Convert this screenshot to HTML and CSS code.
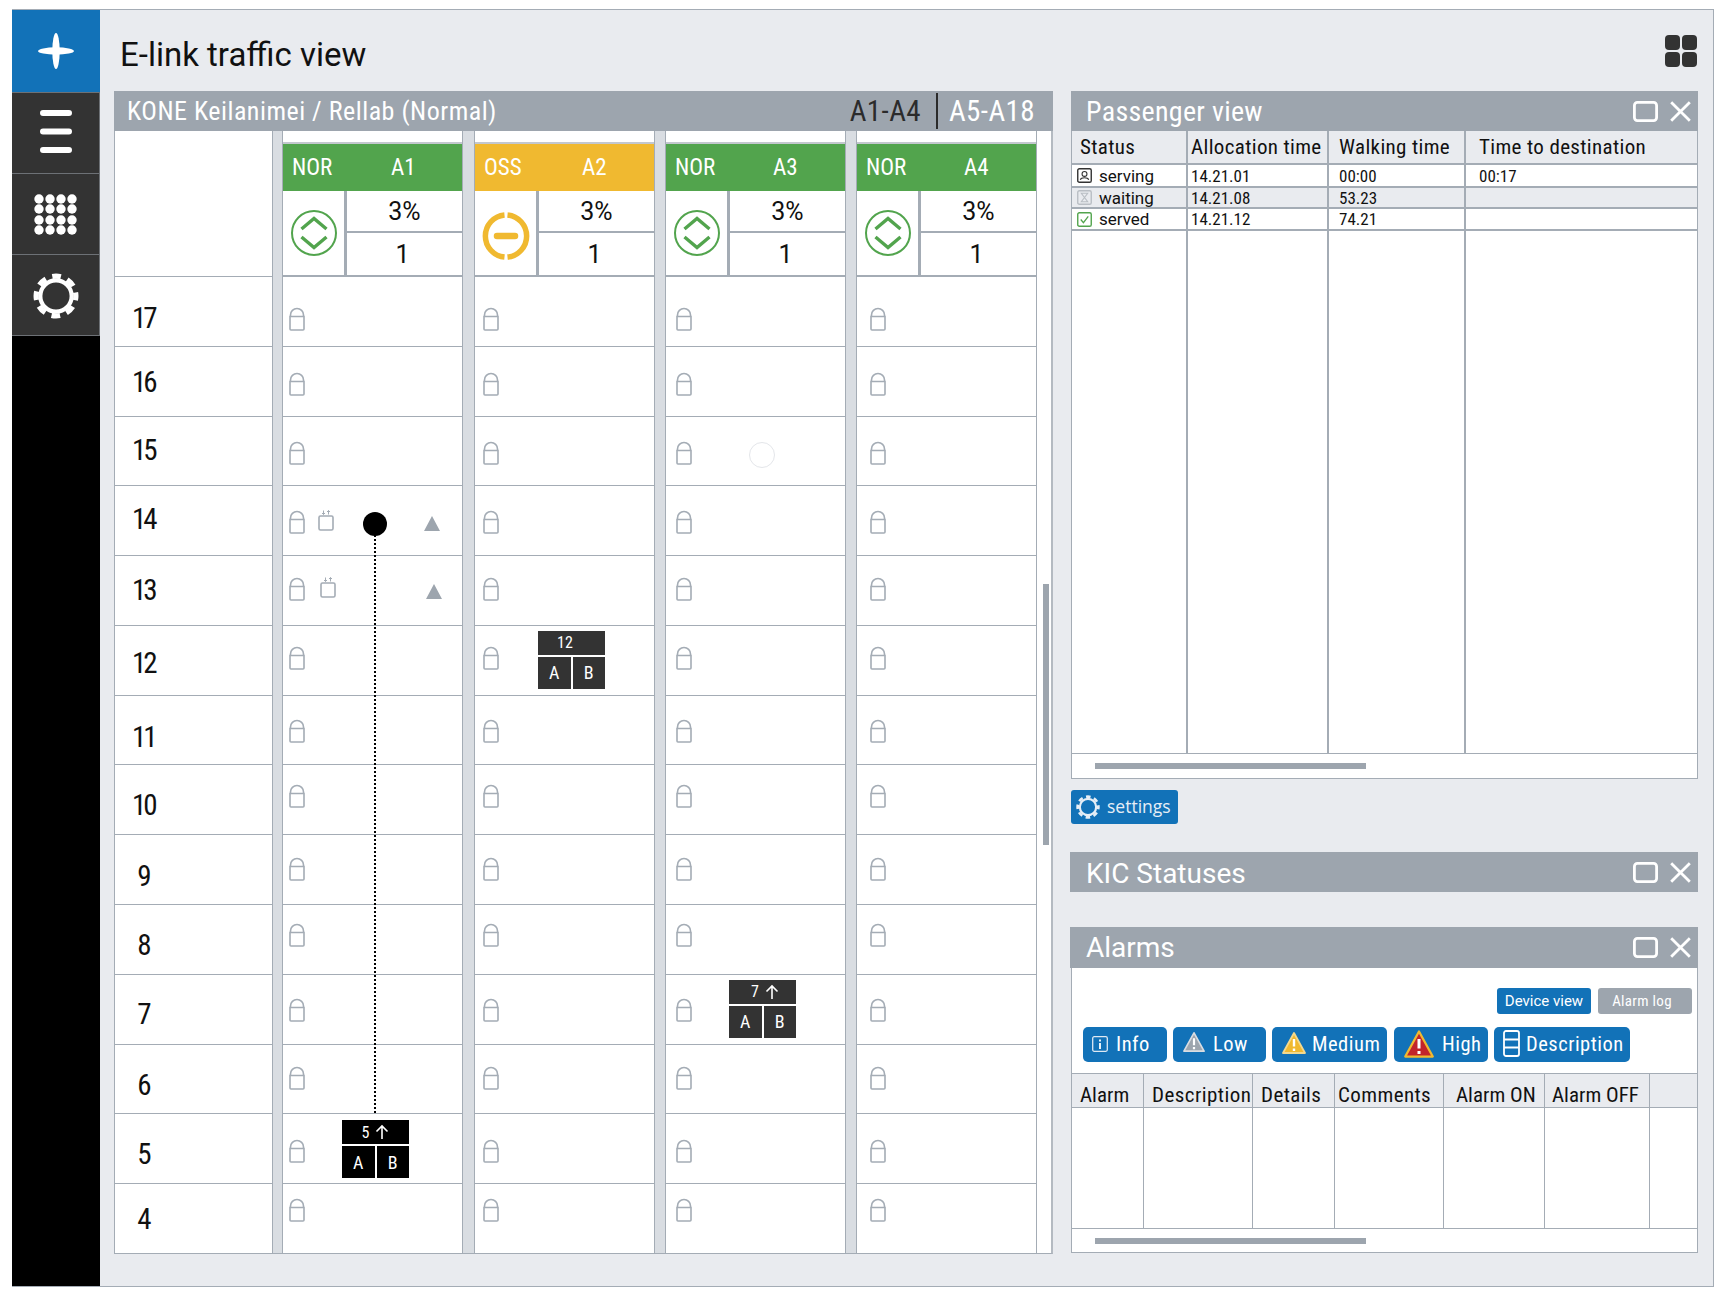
FILE: index.html
```html
<!DOCTYPE html>
<html lang="en">
<head>
<meta charset="utf-8">
<title>E-link traffic view</title>
<link rel="stylesheet" href="styles.css">
</head>
<body>
<svg class="defs" width="0" height="0" aria-hidden="true">
  <symbol id="lock" viewBox="0 0 16 24"><path d="M1.500 10V8a6.500 6.500 0 0 1 13 0v2M1 9.500h14v12.500a1 1 0 0 1-1 1H2a1 1 0 0 1-1-1z" fill="none" stroke="#a4acb5" stroke-width="1.600"/></symbol>
  <symbol id="door" viewBox="0 0 16 21"><rect x="1" y="6" width="14" height="14" rx="1.500" fill="none" stroke="#a4acb5" stroke-width="1.600"/><path d="M5.500 0.500v4M4 3l1.500 1.500L7 3M10.500 4.500v-4M9 2l1.500-1.500L12 2" fill="none" stroke="#a4acb5" stroke-width="1"/></symbol>
  <symbol id="updown" viewBox="0 0 48 48"><circle cx="24" cy="24" r="22" fill="none" stroke="#52a44d" stroke-width="2"/><path d="M11.500 20L24 9.500 36.500 20M11.500 28L24 38.500 36.500 28" fill="none" stroke="#52a44d" stroke-width="3.400"/></symbol>
  <symbol id="maxi" viewBox="0 0 25 21"><rect x="1.400" y="1.400" width="22.200" height="18.200" rx="3" fill="none" stroke="#fff" stroke-width="2.800"/></symbol>
  <symbol id="closex" viewBox="0 0 21 21"><path d="M1.200 1.200L19.800 19.800M19.800 1.200L1.200 19.800" fill="none" stroke="#fff" stroke-width="2.800"/></symbol>
  <symbol id="warn" viewBox="0 0 24 24"><path d="M12 2L23 22H1z" stroke-linejoin="round" stroke-width="1.800"/><path d="M12 8v7.500M12 17.500v2.500" fill="none" stroke="#fff" stroke-width="2.400"/></symbol>
  <symbol id="gear" viewBox="0 0 44 44"><circle cx="22" cy="22" r="15" fill="none" stroke="currentColor" stroke-width="4"/><circle cx="22" cy="22" r="19" fill="none" stroke="currentColor" stroke-width="5" stroke-dasharray="8.400 6.520" stroke-dashoffset="4.200"/></symbol>
</svg>

<div class="frame">
  <nav class="side">
    <div class="side-add"><svg width="38" height="38" viewBox="0 0 38 38"><ellipse cx="19" cy="19" rx="3.700" ry="18" fill="#fff"/><ellipse cx="19" cy="19" rx="18" ry="3.700" fill="#fff"/></svg></div>
    <div class="side-item menu-item"><svg width="32" height="44" viewBox="0 0 32 44"><path d="M3 3h26M3 21.500h26M3 40h26" stroke="#fff" stroke-width="6" stroke-linecap="round"/></svg></div>
    <div class="side-item"><svg width="44" height="41" viewBox="0 0 44 41"><g fill="#fff"><circle cx="5" cy="5" r="4.700"/><circle cx="16" cy="5" r="4.700"/><circle cx="27" cy="5" r="4.700"/><circle cx="38" cy="5" r="4.700"/><circle cx="5" cy="15" r="4.700"/><circle cx="16" cy="15" r="4.700"/><circle cx="27" cy="15" r="4.700"/><circle cx="38" cy="15" r="4.700"/><circle cx="5" cy="26" r="4.700"/><circle cx="16" cy="26" r="4.700"/><circle cx="27" cy="26" r="4.700"/><circle cx="38" cy="26" r="4.700"/><circle cx="5" cy="36" r="4.700"/><circle cx="16" cy="36" r="4.700"/><circle cx="27" cy="36" r="4.700"/><circle cx="38" cy="36" r="4.700"/></g></svg></div>
    <div class="side-item gear-item"><svg width="46" height="46"><use href="#gear"/></svg></div>
    <div class="side-fill"></div>
  </nav>

  <main class="main">
    <header class="topbar">
      <h1 class="title">E-link traffic view</h1>
      <div class="apps"><i></i><i></i><i></i><i></i></div>
    </header>

    <div class="content">
      <section class="board-panel">
        <div class="board-title">
          <span class="board-name">KONE Keilanimei / Rellab (Normal)</span>
          <span class="tab tab-on">A1-A4</span>
          <span class="tab">A5-A18</span>
        </div>
        <div class="board">
          <div class="labels">
            <div class="head-blank"></div>
            <div class="floor r17"><span class="fl">17</span></div>
            <div class="floor r16"><span class="fl">16</span></div>
            <div class="floor r15"><span class="fl">15</span></div>
            <div class="floor r14"><span class="fl">14</span></div>
            <div class="floor r13"><span class="fl">13</span></div>
            <div class="floor r12"><span class="fl">12</span></div>
            <div class="floor r11"><span class="fl">11</span></div>
            <div class="floor r10"><span class="fl">10</span></div>
            <div class="floor r9"><span class="fl">9</span></div>
            <div class="floor r8"><span class="fl">8</span></div>
            <div class="floor r7"><span class="fl">7</span></div>
            <div class="floor r6"><span class="fl">6</span></div>
            <div class="floor r5"><span class="fl">5</span></div>
            <div class="floor r4"><span class="fl">4</span></div>
          </div>
          <div class="gutter"></div>

          <div class="lift a1">
            <div class="lift-head">
              <div class="strip"></div>
              <div class="state ok"><span class="mode">NOR</span><span class="name">A1</span></div>
              <div class="cells"><div class="icon-cell"><svg class="st-icon" viewBox="0 0 48 48"><use href="#updown"/></svg></div><div class="val">3%</div><div class="val">1</div></div>
            </div>
            <div class="floor r17"><svg class="lock"><use href="#lock"/></svg></div>
            <div class="floor r16"><svg class="lock"><use href="#lock"/></svg></div>
            <div class="floor r15"><svg class="lock"><use href="#lock"/></svg></div>
            <div class="floor r14"><svg class="lock"><use href="#lock"/></svg><svg class="door"><use href="#door"/></svg><span class="tri tri14"></span></div>
            <div class="floor r13"><svg class="lock"><use href="#lock"/></svg><svg class="door door13"><use href="#door"/></svg><span class="tri tri13"></span></div>
            <div class="floor r12"><svg class="lock"><use href="#lock"/></svg></div>
            <div class="floor r11"><svg class="lock"><use href="#lock"/></svg></div>
            <div class="floor r10"><svg class="lock"><use href="#lock"/></svg></div>
            <div class="floor r9"><svg class="lock"><use href="#lock"/></svg></div>
            <div class="floor r8"><svg class="lock"><use href="#lock"/></svg></div>
            <div class="floor r7"><svg class="lock"><use href="#lock"/></svg></div>
            <div class="floor r6"><svg class="lock"><use href="#lock"/></svg></div>
            <div class="floor r5"><svg class="lock"><use href="#lock"/></svg>
              <div class="car car-black car-a1"><div class="car-top">5 <svg width="14" height="16" viewBox="0 0 14 16"><path d="M7 15V2M1.500 7.500L7 2l5.500 5.500" fill="none" stroke="#fff" stroke-width="1.600"/></svg></div><div class="car-door">A</div><div class="car-door">B</div></div>
            </div>
            <div class="floor r4"><svg class="lock"><use href="#lock"/></svg></div>
            <div class="dot"></div>
            <div class="route"></div>
          </div>
          <div class="gutter"></div>

          <div class="lift a2">
            <div class="lift-head">
              <div class="strip"></div>
              <div class="state warnbar"><span class="mode">OSS</span><span class="name">A2</span></div>
              <div class="cells"><div class="icon-cell"><svg class="st-icon oss" viewBox="0 0 48 48"><path d="M22.500 2.900A21.200 21.200 0 0 0 22.500 45.100M25.500 2.900A21.200 21.200 0 0 1 25.500 45.100" fill="none" stroke="#f0b930" stroke-width="5.500"/><path d="M15 24h18" stroke="#f0b930" stroke-width="6.500" stroke-linecap="round"/></svg></div><div class="val">3%</div><div class="val">1</div></div>
            </div>
            <div class="floor r17"><svg class="lock"><use href="#lock"/></svg></div>
            <div class="floor r16"><svg class="lock"><use href="#lock"/></svg></div>
            <div class="floor r15"><svg class="lock"><use href="#lock"/></svg></div>
            <div class="floor r14"><svg class="lock"><use href="#lock"/></svg></div>
            <div class="floor r13"><svg class="lock"><use href="#lock"/></svg></div>
            <div class="floor r12"><svg class="lock"><use href="#lock"/></svg>
              <div class="car car-dark car-a2"><div class="car-top">12</div><div class="car-door">A</div><div class="car-door">B</div></div>
            </div>
            <div class="floor r11"><svg class="lock"><use href="#lock"/></svg></div>
            <div class="floor r10"><svg class="lock"><use href="#lock"/></svg></div>
            <div class="floor r9"><svg class="lock"><use href="#lock"/></svg></div>
            <div class="floor r8"><svg class="lock"><use href="#lock"/></svg></div>
            <div class="floor r7"><svg class="lock"><use href="#lock"/></svg></div>
            <div class="floor r6"><svg class="lock"><use href="#lock"/></svg></div>
            <div class="floor r5"><svg class="lock"><use href="#lock"/></svg></div>
            <div class="floor r4"><svg class="lock"><use href="#lock"/></svg></div>
          </div>
          <div class="gutter"></div>

          <div class="lift a3">
            <div class="lift-head">
              <div class="strip"></div>
              <div class="state ok"><span class="mode">NOR</span><span class="name">A3</span></div>
              <div class="cells"><div class="icon-cell"><svg class="st-icon" viewBox="0 0 48 48"><use href="#updown"/></svg></div><div class="val">3%</div><div class="val">1</div></div>
            </div>
            <div class="floor r17"><svg class="lock"><use href="#lock"/></svg></div>
            <div class="floor r16"><svg class="lock"><use href="#lock"/></svg></div>
            <div class="floor r15"><svg class="lock"><use href="#lock"/></svg><span class="ghost"></span></div>
            <div class="floor r14"><svg class="lock"><use href="#lock"/></svg></div>
            <div class="floor r13"><svg class="lock"><use href="#lock"/></svg></div>
            <div class="floor r12"><svg class="lock"><use href="#lock"/></svg></div>
            <div class="floor r11"><svg class="lock"><use href="#lock"/></svg></div>
            <div class="floor r10"><svg class="lock"><use href="#lock"/></svg></div>
            <div class="floor r9"><svg class="lock"><use href="#lock"/></svg></div>
            <div class="floor r8"><svg class="lock"><use href="#lock"/></svg></div>
            <div class="floor r7"><svg class="lock"><use href="#lock"/></svg>
              <div class="car car-dark car-a3"><div class="car-top">7 <svg width="14" height="16" viewBox="0 0 14 16"><path d="M7 15V2M1.500 7.500L7 2l5.500 5.500" fill="none" stroke="#fff" stroke-width="1.600"/></svg></div><div class="car-door">A</div><div class="car-door">B</div></div>
            </div>
            <div class="floor r6"><svg class="lock"><use href="#lock"/></svg></div>
            <div class="floor r5"><svg class="lock"><use href="#lock"/></svg></div>
            <div class="floor r4"><svg class="lock"><use href="#lock"/></svg></div>
          </div>
          <div class="gutter"></div>

          <div class="lift a4">
            <div class="lift-head">
              <div class="strip"></div>
              <div class="state ok"><span class="mode">NOR</span><span class="name">A4</span></div>
              <div class="cells"><div class="icon-cell"><svg class="st-icon" viewBox="0 0 48 48"><use href="#updown"/></svg></div><div class="val">3%</div><div class="val">1</div></div>
            </div>
            <div class="floor r17"><svg class="lock"><use href="#lock"/></svg></div>
            <div class="floor r16"><svg class="lock"><use href="#lock"/></svg></div>
            <div class="floor r15"><svg class="lock"><use href="#lock"/></svg></div>
            <div class="floor r14"><svg class="lock"><use href="#lock"/></svg></div>
            <div class="floor r13"><svg class="lock"><use href="#lock"/></svg></div>
            <div class="floor r12"><svg class="lock"><use href="#lock"/></svg></div>
            <div class="floor r11"><svg class="lock"><use href="#lock"/></svg></div>
            <div class="floor r10"><svg class="lock"><use href="#lock"/></svg></div>
            <div class="floor r9"><svg class="lock"><use href="#lock"/></svg></div>
            <div class="floor r8"><svg class="lock"><use href="#lock"/></svg></div>
            <div class="floor r7"><svg class="lock"><use href="#lock"/></svg></div>
            <div class="floor r6"><svg class="lock"><use href="#lock"/></svg></div>
            <div class="floor r5"><svg class="lock"><use href="#lock"/></svg></div>
            <div class="floor r4"><svg class="lock"><use href="#lock"/></svg></div>
          </div>

          <div class="scroll-lane"><div class="vthumb"></div></div>
        </div>
      </section>

      <aside class="right">
        <section class="win pass">
          <div class="win-title"><span>Passenger view</span><svg class="wbtn"><use href="#maxi"/></svg><svg class="wbtn-x"><use href="#closex"/></svg></div>
          <div class="pass-grid">
            <div class="th">Status</div><div class="th pad0">Allocation time</div><div class="th pad1">Walking time</div><div class="th pad2">Time to destination</div>
            <div class="td st"><svg class="sti" viewBox="0 0 14 14"><rect x=".7" y=".7" width="12.600" height="12.600" rx="1.500" fill="none" stroke="#333" stroke-width="1.300"/><circle cx="7" cy="5.500" r="2.300" fill="none" stroke="#333"/><path d="M3 11c1-2.500 7-2.500 8 0" fill="none" stroke="#333"/></svg>serving</div><div class="td pad0">14.21.01</div><div class="td pad1">00:00</div><div class="td pad2">00:17</div>
            <div class="td grey st"><svg class="sti" viewBox="0 0 14 14"><rect x=".7" y=".7" width="12.600" height="12.600" rx="1.500" fill="#e9ebef" stroke="#b9bec4" stroke-width="1.300"/><path d="M4 3h6L4 11h6z" fill="none" stroke="#b9bec4"/></svg>waiting</div><div class="td grey pad0">14.21.08</div><div class="td grey pad1">53.23</div><div class="td grey"></div>
            <div class="td st"><svg class="sti" viewBox="0 0 14 14"><rect x=".7" y=".7" width="12.600" height="12.600" rx="1.500" fill="none" stroke="#52a44d" stroke-width="1.300"/><path d="M3.500 7l2.500 3 4.500-6" fill="none" stroke="#52a44d" stroke-width="1.200"/></svg>served</div><div class="td pad0">14.21.12</div><div class="td pad1">74.21</div><div class="td"></div>
            <div class="td"></div><div class="td"></div><div class="td"></div><div class="td"></div>
          </div>
          <div class="hscroll"><div class="hthumb"></div></div>
        </section>

        <button class="settings"><svg width="24" height="24"><use href="#gear"/></svg><span>settings</span></button>

        <section class="win kic">
          <div class="win-title"><span>KIC Statuses</span><svg class="wbtn"><use href="#maxi"/></svg><svg class="wbtn-x"><use href="#closex"/></svg></div>
        </section>

        <section class="win alarms">
          <div class="win-title"><span>Alarms</span><svg class="wbtn"><use href="#maxi"/></svg><svg class="wbtn-x"><use href="#closex"/></svg></div>
          <div class="alarm-body">
            <div class="view-btns"><button class="mini">Device view</button><button class="mini off">Alarm log</button></div>
            <div class="filters">
              <button class="fbtn f-info"><svg width="16" height="16" viewBox="0 0 16 16"><rect x=".7" y=".7" width="14.600" height="14.600" rx="1.500" fill="none" stroke="#dfe9f3" stroke-width="1.300"/><path d="M8 3.500v2M8 7v6" stroke="#fff" stroke-width="1.800"/></svg>Info</button>
              <button class="fbtn f-low"><svg class="w-low" width="22" height="22" viewBox="0 0 24 24"><use href="#warn"/></svg>Low</button>
              <button class="fbtn f-med"><svg class="w-med" width="24" height="24" viewBox="0 0 24 24"><use href="#warn"/></svg>Medium</button>
              <button class="fbtn f-high"><svg class="w-high" width="30" height="30" viewBox="0 0 24 24"><use href="#warn"/></svg>High</button>
              <button class="fbtn f-desc"><svg width="17" height="27" viewBox="0 0 17 27"><rect x="1" y="1" width="15" height="25" rx="2" fill="none" stroke="#fff" stroke-width="1.800"/><path d="M1 9.500h15M1 17.500h15" stroke="#fff" stroke-width="1.800"/></svg>Description</button>
            </div>
            <div class="alarm-grid">
              <div class="ah">Alarm</div><div class="ah">Description</div><div class="ah">Details</div><div class="ah">Comments</div><div class="ah">Alarm ON</div><div class="ah">Alarm OFF</div><div class="ah"></div>
              <div class="ad"></div><div class="ad"></div><div class="ad"></div><div class="ad"></div><div class="ad"></div><div class="ad"></div><div class="ad"></div>
            </div>
            <div class="hscroll2"><div class="hthumb"></div></div>
          </div>
        </section>
      </aside>
    </div>
  </main>
</div>
</body>
</html>
```
FILE: styles.css
```css
* { box-sizing: border-box; }
html, body { margin: 0; padding: 0; background: #fff; }
body { font-family: "Roboto", "Liberation Sans", sans-serif; font-stretch: 75%; color: #111; width: 1726px; height: 1298px; }
.defs { position: absolute; }
.frame { display: flex; margin: 9px 12px 0; width: 1702px; height: 1278px; background: #e9ebef; border-top: 1px solid #a4acb5; border-bottom: 1px solid #a4acb5; border-right: 1px solid #a4acb5; }

.side { width: 88px; display: flex; flex-direction: column; flex: none; background: #000; }
.side-add { height: 82px; background: #1272b8; display: flex; align-items: center; justify-content: center; }
.side-item { height: 81px; background: #333; border-top: 1px solid #6d7176; border-right: 1px solid #6d7176; display: flex; align-items: center; justify-content: center; color: #fff; }
.menu-item { padding-bottom: 2px; }
.gear-item { padding-top: 2px; }
.side-fill { flex: 1; background: #000; border-top: 1px solid #6d7176; }

.main { flex: 1; display: flex; flex-direction: column; min-width: 0; }
.topbar { height: 81px; flex: none; display: flex; align-items: center; justify-content: space-between; padding: 0 16px 0 20px; }
.title { margin: 0; font-weight: 400; font-size: 33px; font-stretch: 100%; letter-spacing: 0; color: #111; padding-top: 7px; }
.apps { display: grid; grid-template-columns: 15px 15px; gap: 2px; margin-top: 0; }
.apps i { display: block; width: 15px; height: 15px; border-radius: 4px; background: #333; }

.content { display: flex; padding-left: 14px; gap: 18px; flex: 1; align-items: flex-start; }

.board-panel { width: 939px; flex: none; }
.board-title { height: 40px; background: #9da5ae; color: #fff; display: flex; align-items: center; padding: 0 18px 0 13px; }
.board-name { flex: 1; font-size: 26px; letter-spacing: .5px; }
.tab { font-size: 29px; letter-spacing: .4px; padding: 0 0 0 11px; line-height: 36px; color: #fff; }
.tab-on { color: #2b2b2b; border-right: 2px solid #2b2b2b; padding-right: 15px; }

.board { display: grid; grid-template-columns: 158px 11px 179px 13px 179px 12px 179px 12px 180px 1fr; height: 1123px; background: #fff; border-bottom: 1px solid #a4acb5; border-right: 2px solid #b4bac1; }
.labels { display: flex; flex-direction: column; border-left: 1px solid #a4acb5; }
.head-blank { height: 146px; flex: none; border-bottom: 1px solid #a4acb5; }
.gutter { background: #d9dde2; border-left: 1px solid #a4acb5; border-right: 1px solid #a4acb5; }
.lift { display: flex; flex-direction: column; position: relative; }
.a4 { border-right: 1px solid #a4acb5; }

.floor { flex: 1; min-height: 0; border-bottom: 1px solid #a4acb5; position: relative; display: flex; align-items: flex-start; }
.floor.r4 { border-bottom: 0; }
.fl { font-size: 29px; letter-spacing: -3px; line-height: 30px; margin: var(--ly) 0 0 17px; width: 22px; text-align: center; }
.r17 { --y: 30px; --ly: 26px; }
.r16 { --y: 25px; --ly: 20px; }
.r15 { --y: 24px; --ly: 18px; }
.r14 { --y: 24px; --ly: 18px; }
.r13 { --y: 21px; --ly: 19px; }
.r12 { --y: 20px; --ly: 22px; }
.r11 { --y: 23px; --ly: 26px; }
.r10 { --y: 19px; --ly: 25px; }
.r9 { --y: 22px; --ly: 26px; }
.r8 { --y: 18px; --ly: 25px; }
.r7 { --y: 23px; --ly: 24px; }
.r6 { --y: 21px; --ly: 25px; }
.r5 { --y: 25px; --ly: 25px; }
.r4 { --y: 14px; --ly: 20px; }

.lock { width: 16px; height: 24px; flex: none; margin-top: var(--y); margin-left: 6px; }
.a2 .lock { margin-left: 8px; }
.a3 .lock { margin-left: 10px; }
.a4 .lock { margin-left: 13px; }
.door { width: 16px; height: 21px; flex: none; margin-left: 13px; margin-top: 24px; }
.door13 { margin-left: 15px; margin-top: 21px; }
.tri { position: absolute; width: 0; height: 0; border-left: 8.500px solid transparent; border-right: 8.500px solid transparent; border-bottom: 15px solid #9da5ae; }
.tri14 { left: 141px; top: 30px; }
.tri13 { left: 143px; top: 28px; }
.ghost { position: absolute; left: 83px; top: 25px; width: 26px; height: 26px; border-radius: 50%; border: 1px solid #e4e6ea; }
.dot { position: absolute; left: 80px; top: 381px; width: 24px; height: 24px; border-radius: 50%; background: #000; z-index: 2; }
.route { position: absolute; left: 91px; top: 404px; width: 2px; height: 579px; background: repeating-linear-gradient(to bottom, #000 0 2px, transparent 2px 4px); }

.lift-head { height: 146px; flex: none; display: flex; flex-direction: column; }
.strip { height: 13px; border-bottom: 2px solid #c3c8ce; flex: none; }
.state { height: 47px; flex: none; color: #fff; font-size: 23px; display: flex; align-items: center; }
.ok { background: #52a44d; }
.warnbar { background: #f0b930; }
.mode { width: 107px; padding-left: 9px; }
.a1 .mode { width: 108px; }
.cells { flex: 1; display: grid; grid-template-columns: 61px 1fr; grid-template-rows: 40px 1fr; gap: 2px 3px; background: #a4acb5; padding-bottom: 2px; }
.icon-cell { grid-row: 1 / span 2; background: #fff; display: flex; align-items: center; justify-content: center; }
.st-icon { width: 48px; height: 48px; }
.oss { margin-top: 5px; }
.val { background: #fff; display: flex; align-items: center; justify-content: center; font-size: 25px; font-stretch: 100%; }
.val + .val { padding-right: 4px; }

.car { position: absolute; display: grid; grid-template-columns: 1fr 1fr; grid-template-rows: 24px 1fr; gap: 2px; width: 67px; height: 58px; color: #fff; z-index: 2; }
.car > div { display: flex; align-items: center; justify-content: center; }
.car-top { grid-column: 1 / span 2; font-size: 16px; gap: 6px; }
.car-door { font-size: 18px; }
.car-black > div { background: #000; }
.car-dark > div { background: #333; }
.car-a1 { left: 59px; top: 6px; }
.car-a2 { left: 63px; top: 5px; }
.car-a2 .car-top { padding-right: 13px; }
.car-a3 { left: 63px; top: 5px; }
.car-a3 .car-top { padding-left: 5px; }

.scroll-lane { position: relative; }
.vthumb { position: absolute; left: 6px; top: 453px; width: 6px; height: 261px; background: #9da5ae; }

.right { width: 627px; flex: none; display: flex; flex-direction: column; align-items: stretch; }
.win-title { height: 40px; background: #9da5ae; color: #fff; display: flex; align-items: center; padding-left: 16px; font-size: 28px; font-stretch: 90%; flex: none; }
.win-title span { flex: 1; }
.wbtn { width: 25px; height: 21px; margin-right: 12px; flex: none; }
.wbtn-x { width: 21px; height: 21px; margin-right: 7px; flex: none; }
.pass .win-title { font-size: 28px; font-stretch: 75%; letter-spacing: .3px; padding-left: 15px; }
.kic .win-title span { padding-top: 3px; }

.pass { height: 688px; display: flex; flex-direction: column; }
.pass-grid { flex: 1; display: grid; grid-template-columns: 114px 139px 135px 1fr; grid-template-rows: 32px 21px 19px 20px 1fr; gap: 2px; background: #a4acb5; padding: 0 1px; min-height: 0; }
.th { background: #e9ebef; font-size: 21px; letter-spacing: .35px; display: flex; align-items: center; padding-left: 8px; white-space: nowrap; }
.td { background: #fff; font-size: 17px; display: flex; align-items: center; padding-left: 6px; white-space: nowrap; }
.td.grey { background: #e9ebef; }
.td.st { padding-left: 5px; gap: 7px; font-stretch: 88%; }
.sti { width: 15px; height: 15px; flex: none; }
.pad0 { padding-left: 3px; }
.pad1 { padding-left: 10px; }
.pad2 { padding-left: 13px; }
.hscroll { height: 26px; background: #fff; border: 1px solid #a4acb5; display: flex; align-items: center; padding-left: 23px; flex: none; }
.hthumb { width: 271px; height: 6px; background: #9da5ae; }

.settings { margin-top: 11px; width: 107px; height: 34px; background: #1272b8; border: 0; border-radius: 3px; color: #e6eef6; display: flex; align-items: center; gap: 7px; padding: 0 0 0 5px; font-family: "Open Sans", sans-serif; font-stretch: 100%; font-size: 17.500px; }
.settings span { padding-bottom: 2px; }
.kic { margin-top: 28px; margin-left: -1px; }
.alarms { margin-top: 35px; margin-left: -1px; }
.alarms .win-title { height: 41px; }
.alarm-body { background: #fff; border: 1px solid #a4acb5; border-top: 0; margin-left: 1px; height: 285px; display: flex; flex-direction: column; }
.view-btns { display: flex; justify-content: flex-end; gap: 7px; padding: 20px 5px 0 0; }
.mini { width: 94px; height: 26px; border: 0; border-radius: 3px; background: #1272b8; color: #fff; font-family: inherit; font-stretch: 90%; font-size: 15px; padding: 0; }
.mini.off { background: #9da5ae; padding-right: 6px; font-stretch: 75%; letter-spacing: .3px; }
.filters { display: flex; padding: 13px 0 0 11px; gap: 6px; }
.fbtn { height: 35px; border: 0; border-radius: 5px; background: #1272b8; color: #fff; font-family: inherit; font-stretch: 75%; letter-spacing: .5px; font-size: 20.500px; display: flex; align-items: center; padding: 0 0 2px 10px; gap: 8px; flex: none; white-space: nowrap; }
.fbtn svg { flex: none; }
.f-info { width: 84px; padding-left: 9px; }
.f-low { width: 93px; }
.f-med { width: 115px; margin-right: 1px; gap: 6px; }
.f-high { width: 94px; gap: 8px; }
.f-desc { width: 136px; padding-left: 9px; gap: 6px; }
.w-low { fill: #9da5ae; stroke: #d9dde2; margin-top: -4px; }
.w-med { fill: #f0b930; stroke: #f3d98e; margin-top: -2px; }
.w-high { fill: #c2242b; stroke: #f0b930; margin-top: 1px; }
.alarm-grid { margin-top: 11px; flex: 1; display: grid; grid-template-columns: 71px 108px 81px 108px 100px 104px 1fr; grid-template-rows: 33px 1fr; gap: 1px; background: #a4acb5; padding: 1px 0; min-height: 0; }
.ah { background: #e9ebef; font-size: 21px; padding: 10px 0 0 8px; line-height: 22px; white-space: nowrap; }
.ah:nth-child(2) { letter-spacing: .45px; }
.ah:nth-child(3) { letter-spacing: .4px; }
.ah:nth-child(4) { padding-left: 3px; letter-spacing: .4px; }
.ah:nth-child(5) { padding-left: 12px; }
.ah:nth-child(6) { padding-left: 7px; }
.ad { background: #fff; }
.hscroll2 { height: 23px; display: flex; align-items: center; padding-left: 23px; flex: none; }
```
